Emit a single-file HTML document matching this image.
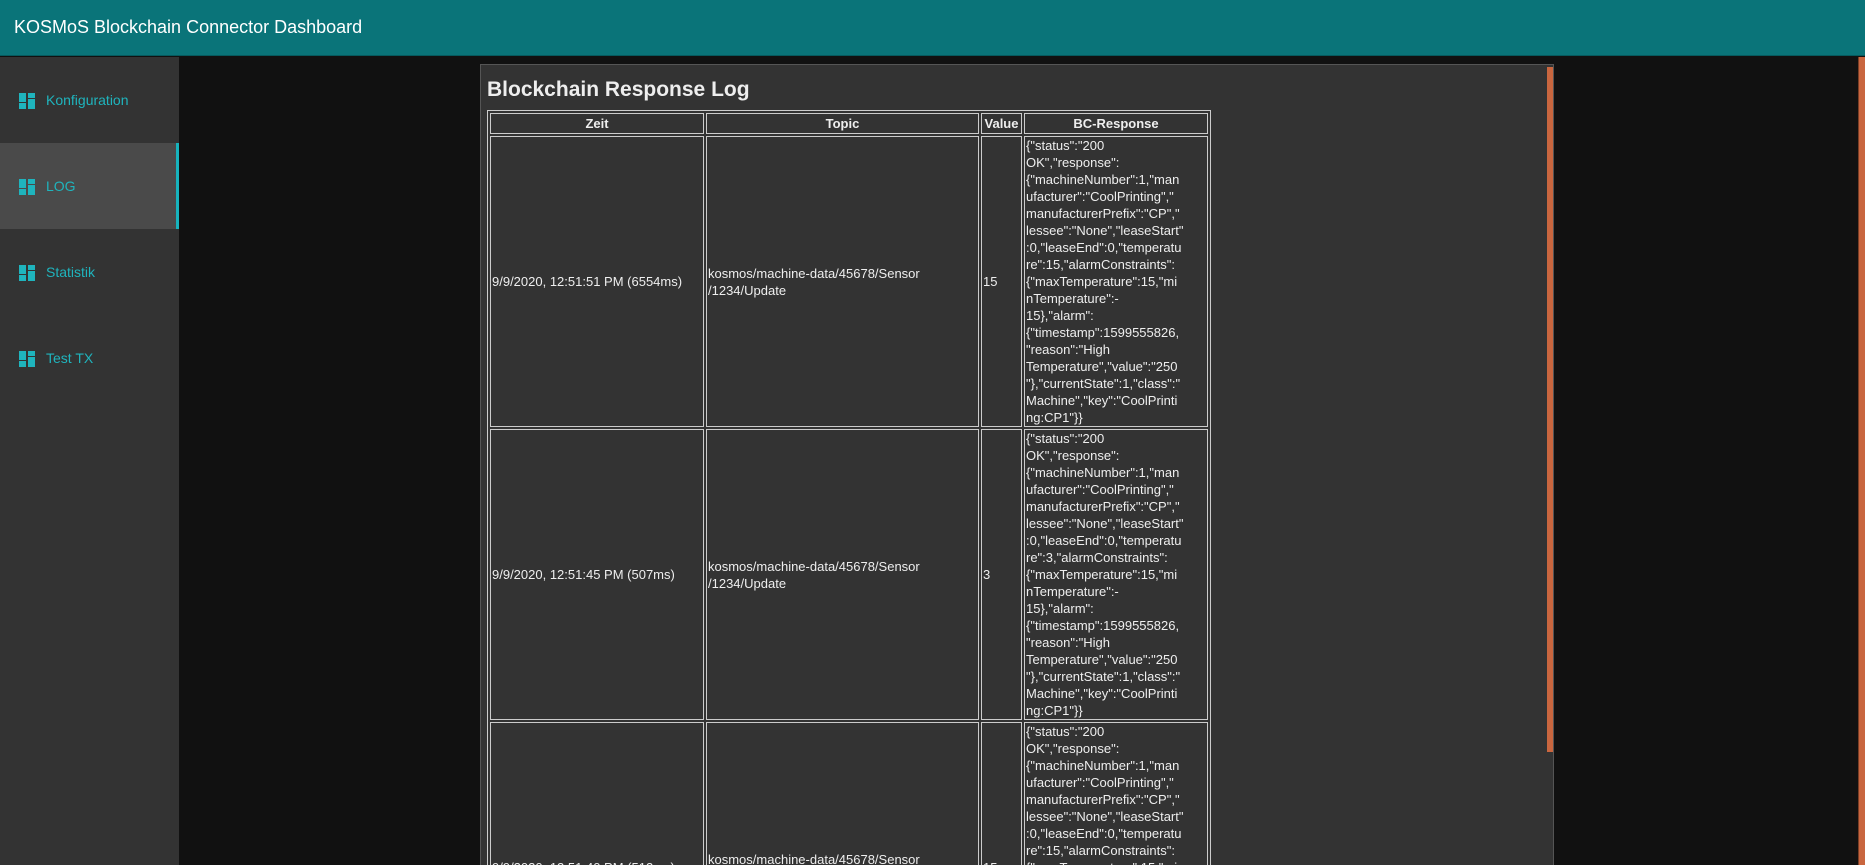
<!DOCTYPE html>
<html style="width:1865px;height:865px;overflow:hidden"><head><meta charset="utf-8"><style>
*{margin:0;padding:0;box-sizing:border-box}
body{width:1865px;height:865px;overflow:hidden;background:#111;font-family:"Liberation Sans",sans-serif;color:#eee}
.wrap{position:relative;width:1865px;height:865px;overflow:hidden;background:#111}
.hdr{position:absolute;left:0;top:0;width:1865px;height:56px;background:#0a7479;border-bottom:1px solid #065a5e}
.hdr span{position:absolute;left:14px;top:17px;font-size:18px;color:#fff}
.side{position:absolute;left:0;top:57px;width:179px;height:808px;background:#333}
.item{height:86px;position:relative;color:#1fb4bd;font-size:14px}
.item.act{background:#4a4a4a;border-right:3px solid #17b3bd}
.item span{position:absolute;left:46px;top:35px}
.ic{position:absolute;left:19px;top:36px;width:16px;height:16px}
.panel{position:absolute;left:480px;top:64px;width:1074px;height:820px;background:#333;border:1px solid #555}
.sb{position:absolute;left:1547px;top:67px;width:6px;height:685px;background:#c9663f}
.psb{position:absolute;left:1858px;top:57px;width:7px;height:808px;background:#c9663f;border-left:1px solid #7a3e26}
h2{position:absolute;left:487px;top:78px;font-size:21px;font-weight:bold;color:#eee}
table{position:absolute;left:487px;top:110px;border:1px solid #ccc;border-spacing:2px;width:722px;table-layout:fixed}
td,th{border:1px solid #ccc;font-size:13px;padding:0 1px;vertical-align:middle;text-align:left;line-height:17px;white-space:nowrap;overflow:hidden}
th{text-align:center;font-weight:bold;height:21px}
td.r{height:291px}
</style></head><body><div class="wrap">
<div class="hdr"><span>KOSMoS Blockchain Connector Dashboard</span></div>
<div class="side">
<div class="item"><svg class="ic" viewBox="0 0 16 16"><rect x="0" y="0" width="7" height="9" fill="#1fb4bd"/><rect x="0" y="10" width="7" height="6" fill="#1fb4bd"/><rect x="9" y="0" width="7" height="5" fill="#1fb4bd"/><rect x="9" y="6" width="7" height="10" fill="#1fb4bd"/></svg><span>Konfiguration</span></div>
<div class="item act"><svg class="ic" viewBox="0 0 16 16"><rect x="0" y="0" width="7" height="9" fill="#1fb4bd"/><rect x="0" y="10" width="7" height="6" fill="#1fb4bd"/><rect x="9" y="0" width="7" height="5" fill="#1fb4bd"/><rect x="9" y="6" width="7" height="10" fill="#1fb4bd"/></svg><span>LOG</span></div>
<div class="item"><svg class="ic" viewBox="0 0 16 16"><rect x="0" y="0" width="7" height="9" fill="#1fb4bd"/><rect x="0" y="10" width="7" height="6" fill="#1fb4bd"/><rect x="9" y="0" width="7" height="5" fill="#1fb4bd"/><rect x="9" y="6" width="7" height="10" fill="#1fb4bd"/></svg><span>Statistik</span></div>
<div class="item"><svg class="ic" viewBox="0 0 16 16"><rect x="0" y="0" width="7" height="9" fill="#1fb4bd"/><rect x="0" y="10" width="7" height="6" fill="#1fb4bd"/><rect x="9" y="0" width="7" height="5" fill="#1fb4bd"/><rect x="9" y="6" width="7" height="10" fill="#1fb4bd"/></svg><span>Test TX</span></div>
</div>
<div class="panel"></div>
<div class="sb"></div>
<div class="psb"></div>
<h2>Blockchain Response Log</h2>
<table>
<colgroup><col style="width:214px"><col style="width:273px"><col style="width:41px"><col style="width:184px"></colgroup>
<tr><th>Zeit</th><th>Topic</th><th>Value</th><th>BC-Response</th></tr>
<tr><td class="r">9/9/2020, 12:51:51 PM (6554ms)</td><td>kosmos/machine-data/45678/Sensor<br>/1234/Update</td><td>15</td><td>{"status":"200<br>OK","response":<br>{"machineNumber":1,"man<br>ufacturer":"CoolPrinting","<br>manufacturerPrefix":"CP","<br>lessee":"None","leaseStart"<br>:0,"leaseEnd":0,"temperatu<br>re":15,"alarmConstraints":<br>{"maxTemperature":15,"mi<br>nTemperature":-<br>15},"alarm":<br>{"timestamp":1599555826,<br>"reason":"High<br>Temperature","value":"250<br>"},"currentState":1,"class":"<br>Machine","key":"CoolPrinti<br>ng:CP1"}}</td></tr>
<tr><td class="r">9/9/2020, 12:51:45 PM (507ms)</td><td>kosmos/machine-data/45678/Sensor<br>/1234/Update</td><td>3</td><td>{"status":"200<br>OK","response":<br>{"machineNumber":1,"man<br>ufacturer":"CoolPrinting","<br>manufacturerPrefix":"CP","<br>lessee":"None","leaseStart"<br>:0,"leaseEnd":0,"temperatu<br>re":3,"alarmConstraints":<br>{"maxTemperature":15,"mi<br>nTemperature":-<br>15},"alarm":<br>{"timestamp":1599555826,<br>"reason":"High<br>Temperature","value":"250<br>"},"currentState":1,"class":"<br>Machine","key":"CoolPrinti<br>ng:CP1"}}</td></tr>
<tr><td class="r">9/9/2020, 12:51:40 PM (512ms)</td><td>kosmos/machine-data/45678/Sensor<br>/1234/Update</td><td>15</td><td>{"status":"200<br>OK","response":<br>{"machineNumber":1,"man<br>ufacturer":"CoolPrinting","<br>manufacturerPrefix":"CP","<br>lessee":"None","leaseStart"<br>:0,"leaseEnd":0,"temperatu<br>re":15,"alarmConstraints":<br>{"maxTemperature":15,"mi<br>nTemperature":-<br>15},"alarm":<br>{"timestamp":1599555826,<br>"reason":"High<br>Temperature","value":"250<br>"},"currentState":1,"class":"<br>Machine","key":"CoolPrinti<br>ng:CP1"}}</td></tr>
</table>
</div></body></html>
